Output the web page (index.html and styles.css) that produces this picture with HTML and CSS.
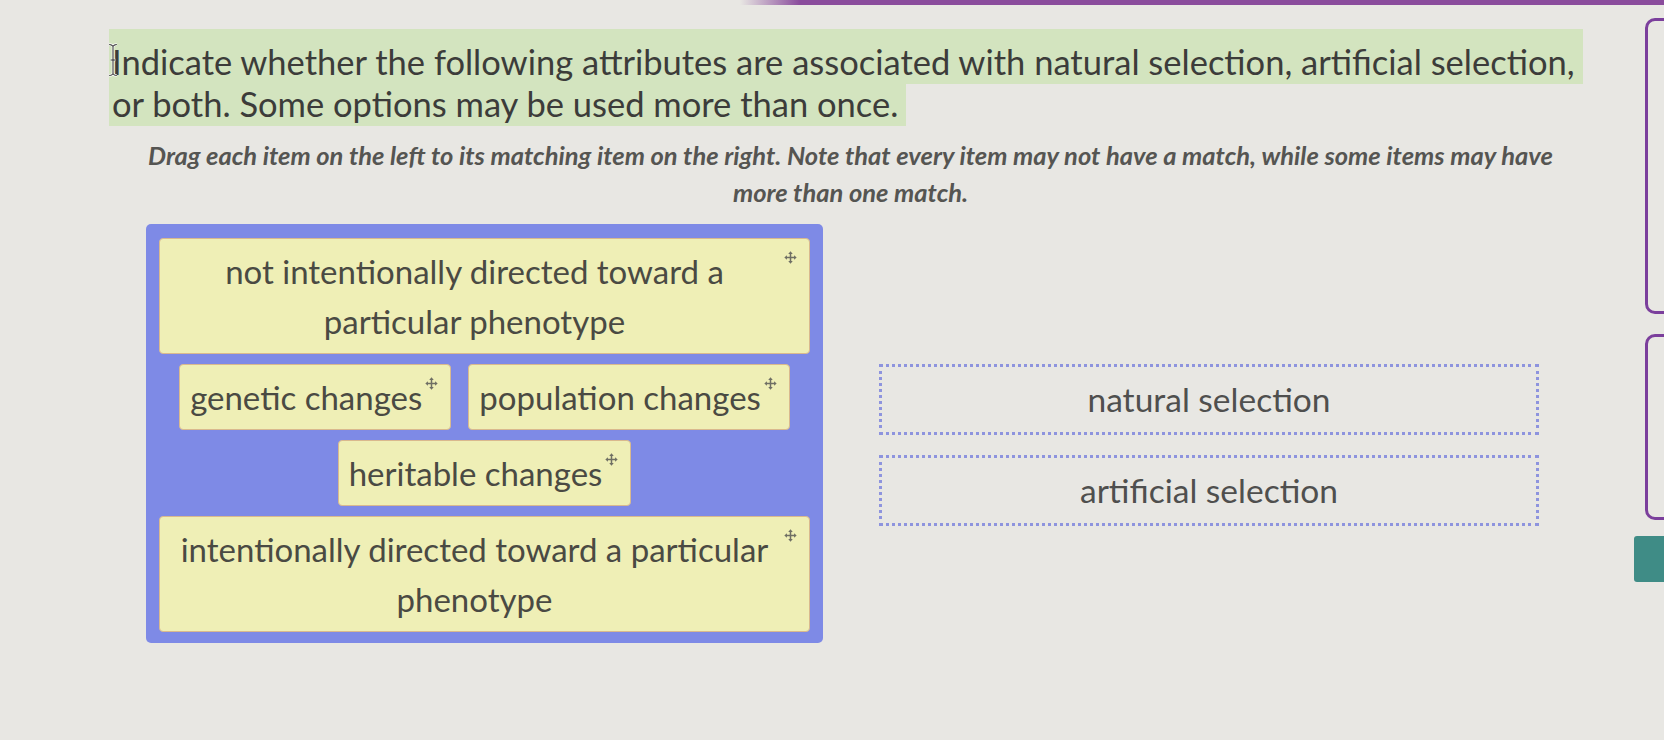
FILE: index.html
```html
<!DOCTYPE html>
<html lang="en">
<head>
<meta charset="utf-8">
<title>Matching</title>
<link rel="stylesheet" href="styles.css">
</head>
<body>
<div class="topbar"></div>
<div class="screen">
  <main class="content">
    <h1 class="prompt">
      <span class="hl"><span class="txt">Indicate whether the following attributes are associated with natural selection, artificial selection,<br>or both. Some options may be used more than once.</span></span>
      <svg class="ibeam" viewBox="0 0 10 36" width="10" height="34" aria-hidden="true"><path d="M1 1.5c2 0 3 .5 4 2c1-1.5 2-2 4-2M5 3.5v29M1 34.5c2 0 3-.5 4-2c1 1.5 2 2 4 2M2.5 18h5" fill="none" stroke="#fff" stroke-width="2.6"/><path d="M1 1.5c2 0 3 .5 4 2c1-1.5 2-2 4-2M5 3.5v29M1 34.5c2 0 3-.5 4-2c1 1.5 2 2 4 2M2.5 18h5" fill="none" stroke="#333" stroke-width="1.1"/></svg>
    </h1>
    <p class="instr">Drag each item on the left to its matching item on the right. Note that every item may not have a match, while some items may have<br>more than one match.</p>
    <div class="dnd">
      <div class="source">
        <div class="item wide">not intentionally directed toward a particular phenotype<svg class="move" viewBox="0 0 12 12"><path d="M6 0.3L3.9 2.7h1.4v2.6H2.7V3.9L0.3 6l2.4 2.1V6.7h2.6v2.6H3.9L6 11.7l2.1-2.4H6.7V6.7h2.6v1.4L11.7 6 9.3 3.9v1.4H6.7V2.7h1.4z"/></svg></div>
        <div class="item">genetic changes<svg class="move" viewBox="0 0 12 12"><path d="M6 0.3L3.9 2.7h1.4v2.6H2.7V3.9L0.3 6l2.4 2.1V6.7h2.6v2.6H3.9L6 11.7l2.1-2.4H6.7V6.7h2.6v1.4L11.7 6 9.3 3.9v1.4H6.7V2.7h1.4z"/></svg></div>
        <div class="item">population changes<svg class="move" viewBox="0 0 12 12"><path d="M6 0.3L3.9 2.7h1.4v2.6H2.7V3.9L0.3 6l2.4 2.1V6.7h2.6v2.6H3.9L6 11.7l2.1-2.4H6.7V6.7h2.6v1.4L11.7 6 9.3 3.9v1.4H6.7V2.7h1.4z"/></svg></div>
        <div class="item">heritable changes<svg class="move" viewBox="0 0 12 12"><path d="M6 0.3L3.9 2.7h1.4v2.6H2.7V3.9L0.3 6l2.4 2.1V6.7h2.6v2.6H3.9L6 11.7l2.1-2.4H6.7V6.7h2.6v1.4L11.7 6 9.3 3.9v1.4H6.7V2.7h1.4z"/></svg></div>
        <div class="item wide">intentionally directed toward a particular phenotype<svg class="move" viewBox="0 0 12 12"><path d="M6 0.3L3.9 2.7h1.4v2.6H2.7V3.9L0.3 6l2.4 2.1V6.7h2.6v2.6H3.9L6 11.7l2.1-2.4H6.7V6.7h2.6v1.4L11.7 6 9.3 3.9v1.4H6.7V2.7h1.4z"/></svg></div>
      </div>
      <div class="targets">
        <div class="target">natural selection</div>
        <div class="target">artificial selection</div>
      </div>
    </div>
  </main>
  <aside class="side">
    <div class="panel p1"></div>
    <div class="panel p2"></div>
    <div class="tab"></div>
  </aside>
</div>
</body>
</html>
```

FILE: styles.css
```css
* { box-sizing: border-box; }
html, body { margin: 0; padding: 0; }
body {
  width: 1664px;
  height: 740px;
  overflow: hidden;
  background: #e8e7e3;
  font-family: Lato, "Open Sans", sans-serif;
  color: #3c3c3a;
}
.topbar {
  height: 5px;
  margin-left: 740px;
  background: linear-gradient(90deg, rgba(138, 76, 156, 0) 0, #8a4c9c 60px);
}
.screen {
  display: flex;
  height: 735px;
}
.content {
  flex: 1;
  padding: 0 40px 0 109px;
}
.prompt {
  position: relative;
  margin: 36px 0 0;
  font-size: 34.5px;
  font-weight: 400;
  line-height: 42px;
  white-space: nowrap;
}
.hl {
  background: #d3e4bf;
  padding: 12px 8px 2px 3px;
  -webkit-box-decoration-break: clone;
  box-decoration-break: clone;
}
.txt {
  position: relative;
}
.ibeam {
  position: absolute;
  left: -1px;
  top: 2px;
}
.instr {
  margin: 12px 0 0;
  width: 1483px;
  text-align: center;
  font-size: 25.5px;
  font-weight: 700;
  font-style: italic;
  line-height: 37px;
  color: #555552;
  white-space: nowrap;
}
.dnd {
  display: flex;
  align-items: center;
  gap: 56px;
  margin: 13px 0 0 37px;
}
.source {
  width: 677px;
  padding: 14px 13px 11px;
  background: #7e8ae6;
  border-radius: 5px;
  display: flex;
  flex-wrap: wrap;
  justify-content: center;
  gap: 10px 17px;
}
.item {
  position: relative;
  background: #efefb6;
  border: 1px solid #d9b98e;
  border-radius: 4px;
  padding: 7px 28px 7px 10px;
  font-size: 33px;
  line-height: 50px;
  text-align: center;
  color: #4a4a43;
}
.item.wide { padding-left: 20px; padding-right: 40px; }
.move {
  position: absolute;
  top: 12px;
  right: 12px;
  width: 13px;
  height: 13px;
  fill: #6f6f64;
}
.targets {
  width: 660px;
  display: flex;
  flex-direction: column;
  gap: 20px;
  margin-top: 22px;
}
.target {
  height: 71px;
  border: 3px dotted #8e94de;
  display: flex;
  align-items: center;
  justify-content: center;
  font-size: 33.5px;
  color: #4f4f4e;
}
.side {
  width: 32px;
  overflow: hidden;
  padding-top: 13px;
  display: flex;
  flex-direction: column;
}
.panel {
  margin-left: 13px;
  width: 60px;
  border: 3px solid #7b3f9c;
  border-radius: 10px;
}
.p1 { height: 296px; }
.p2 { height: 186px; margin-top: 20px; }
.tab {
  margin-top: 16px;
  margin-left: 2px;
  width: 40px;
  height: 46px;
  background: #3f8c86;
  border-radius: 3px;
}
```
